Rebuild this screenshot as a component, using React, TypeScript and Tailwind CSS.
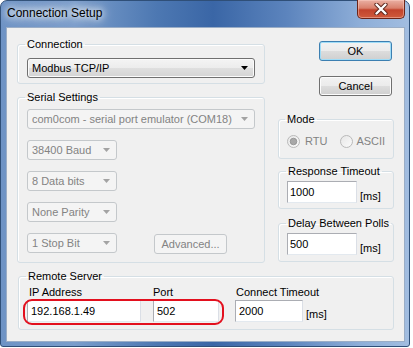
import React from 'react';

const ui = "font-['Liberation_Sans',Arial,sans-serif]";

type GroupProps = {
    title: string;
    className?: string;
    bodyClassName?: string;
    legendClassName?: string;
    children: React.ReactNode;
};

const GroupBox: React.FC<GroupProps> = ({ title, className = '', bodyClassName = '', legendClassName = 'ml-[7px]', children }) => (
    <fieldset className={`rounded-[3px] border border-[#d5dfe5] shadow-[inset_1px_1px_0_#fff] ${className}`}>
        <legend className={`px-[2px] text-[11px] leading-[13px] text-black ${legendClassName}`}>{title}</legend>
        <div className={bodyClassName}>{children}</div>
    </fieldset>
);

const Arrow: React.FC<{ color: string }> = ({ color }) => (
    <svg width="7" height="4" viewBox="0 0 7 4" className="shrink-0">
        <polygon points="0,0 7,0 3.5,4" fill={color} />
    </svg>
);

const Combo: React.FC<{ value: string; className: string; disabled?: boolean }> = ({ value, className, disabled }) => (
    <div
        className={`flex h-[20px] items-center justify-between rounded-[3px] border pl-[4px] pr-[6px] text-[11px] ${
            disabled
                ? 'border-[#c4c8cb] bg-[#f4f4f4] text-[#838383]'
                : 'border-[#707070] bg-[linear-gradient(#f4f4f4,#ececec_50%,#dfdfdf_50%,#d4d4d4)] text-black shadow-[inset_0_0_0_1px_#fbfbfb]'
        } ${className}`}
    >
        <span className="whitespace-nowrap">{value}</span>
        <Arrow color={disabled ? '#a3a3a3' : '#000'} />
    </div>
);

const TextBox: React.FC<{ value: string; className: string }> = ({ value, className }) => (
    <div
        className={`flex h-[22px] items-center border border-[#abadb3] border-b-[#e3e9ef] border-r-[#dbdfe6] bg-white pl-[2px] text-[11px] text-black ${className}`}
    >
        {value}
    </div>
);

const Radio: React.FC<{ checked?: boolean }> = ({ checked }) => (
    <svg width="13" height="13" viewBox="0 0 13 13" className="shrink-0">
        <defs>
            <linearGradient id="rg" x1="0" y1="0" x2="1" y2="1">
                <stop offset="0" stopColor="#e6e6e6" />
                <stop offset="1" stopColor="#fbfbfb" />
            </linearGradient>
        </defs>
        <circle cx="6.5" cy="6.5" r="6" fill="url(#rg)" stroke="#b9b9b9" />
        {checked && <circle cx="6.5" cy="6.5" r="3.3" fill="#a8a8a8" stroke="#8e8e8e" strokeWidth="0.8" />}
    </svg>
);

const WinButton: React.FC<{ label: string; isDefault?: boolean; disabled?: boolean; className?: string }> = ({
    label,
    isDefault,
    disabled,
    className = '',
}) => (
    <div
        className={`flex h-[20px] w-[73px] items-center justify-center rounded-[3px] border text-[11px] ${
            disabled
                ? 'border-[#c4c8cb] bg-[#f4f4f4] text-[#838383]'
                : isDefault
                ? 'border-[#3c7fb1] bg-[linear-gradient(#f2f2f2,#ebebeb_50%,#dddddd_50%,#cfcfcf)] text-black shadow-[inset_0_0_0_1px_#9fdcf7]'
                : 'border-[#707070] bg-[linear-gradient(#f2f2f2,#ebebeb_50%,#dddddd_50%,#cfcfcf)] text-black shadow-[inset_0_0_0_1px_#fcfcfc]'
        } ${className}`}
    >
        {label}
    </div>
);

export default function App() {
    return (
        <div className={`h-[348px] w-[413px] overflow-hidden bg-white ${ui}`}>
            <div className="flex h-[347px] w-[410px] flex-col rounded-t-[7px] rounded-b-[3px] border border-[#2f4f78] bg-[linear-gradient(90deg,#6e93c5_0%,#7a9dcb_18%,#4d78b2_38%,#3a66a6_52%,#5c84bd_70%,#8eaed8_88%,#a2bde0_100%)] pb-[4px] pl-[5px] pr-[4px]">
                {/* title bar */}
                <div className="flex h-[26px] shrink-0 items-start justify-between">
                    <div className="ml-[1px] mt-[5px] text-[12px] leading-[15px] text-black [text-shadow:0_0_6px_#fff,0_0_10px_#fff,0_0_14px_#fff]">
                        Connection Setup
                    </div>
                    <div className="-mt-px flex h-[19px] w-[48px] items-center justify-center rounded-b-[5px] border border-t-0 border-[#6b2418] bg-[linear-gradient(#eab0a3,#d9806c_45%,#c2432c_55%,#cf5a3c)] shadow-[inset_0_0_0_1px_rgba(255,210,200,0.45)]">
                        <svg width="14" height="12" viewBox="0 0 14 12">
                            <path d="M2.5 1.5 L11.5 10.5 M11.5 1.5 L2.5 10.5" stroke="#5a241b" strokeWidth="4.2" strokeLinecap="round" />
                            <path d="M2.5 1.5 L11.5 10.5 M11.5 1.5 L2.5 10.5" stroke="#fff" strokeWidth="2.4" strokeLinecap="round" />
                        </svg>
                    </div>
                </div>

                {/* client area */}
                <div className="flex-1 border border-[#9aadc6] bg-[#f0f0f0] pl-[10px] pt-[10px] text-[11px]">
                    <div className="flex gap-[13px]">
                        {/* left column */}
                        <div className="flex w-[248px] flex-col">
                            <GroupBox title="Connection" bodyClassName="pl-[9px] pt-[7px] pb-[5px]">
                                <Combo value="Modbus TCP/IP" className="w-[228px]" />
                            </GroupBox>
                            <GroupBox title="Serial Settings" className="mt-[7px]" bodyClassName="flex flex-col gap-[11px] pl-[9px] pt-[5px] pb-[8px]">
                                <Combo value="com0com - serial port emulator (COM18)" className="w-[228px]" disabled />
                                <Combo value="38400 Baud" className="w-[90px]" disabled />
                                <Combo value="8 Data bits" className="w-[90px]" disabled />
                                <Combo value="None Parity" className="w-[90px]" disabled />
                                <div className="flex items-start gap-[37px]">
                                    <Combo value="1 Stop Bit" className="w-[90px]" disabled />
                                    <WinButton label="Advanced..." disabled className="mt-px" />
                                </div>
                            </GroupBox>
                        </div>

                        {/* right column */}
                        <div className="flex w-[116px] flex-col">
                            <WinButton label="OK" isDefault className="mr-[2px] mt-[3px] self-end" />
                            <WinButton label="Cancel" className="mr-[2px] mt-[15px] self-end" />
                            <GroupBox title="Mode" className="mt-[17px]" legendClassName="ml-[6px]" bodyClassName="flex h-[14px] items-center pl-[8px] mt-[8px] mb-[10px] text-[#838383]">
                                <Radio checked />
                                <span className="ml-[5px]">RTU</span>
                                <span className="ml-[13px] flex items-center">
                                    <Radio />
                                    <span className="ml-[3px]">ASCII</span>
                                </span>
                            </GroupBox>
                            <GroupBox title="Response Timeout" className="mt-[6px]" bodyClassName="flex items-end gap-[3px] pl-[8px] pt-[3px] pb-[5px]">
                                <TextBox value="1000" className="w-[70px]" />
                                <span className="leading-[13px]">[ms]</span>
                            </GroupBox>
                            <GroupBox title="Delay Between Polls" className="mt-[8px]" bodyClassName="flex items-end gap-[3px] pl-[8px] pt-[3px] pb-[6px]">
                                <TextBox value="500" className="w-[70px]" />
                                <span className="leading-[13px]">[ms]</span>
                            </GroupBox>
                        </div>
                    </div>

                    {/* remote server */}
                    <GroupBox title="Remote Server" className="ml-[1px] mt-[7px] w-[376px]" bodyClassName="relative flex pl-[8px] pt-[3px] pb-[7px]">
                        <div className="flex w-[114px] flex-col">
                            <span className="pl-[2px] leading-[13px]">IP Address</span>
                            <TextBox value="192.168.1.49" className="mt-px w-[114px] pl-[3px]" />
                        </div>
                        <div className="ml-[12px] flex w-[66px] flex-col">
                            <span className="leading-[13px]">Port</span>
                            <TextBox value="502" className="mt-px w-[66px] pl-[3px]" />
                        </div>
                        <div className="ml-[16px] flex flex-col">
                            <span className="pl-px leading-[13px]">Connect Timeout</span>
                            <div className="mt-px flex items-end gap-[3px]">
                                <TextBox value="2000" className="w-[68px] pl-[3px]" />
                                <span className="mb-px leading-[13px]">[ms]</span>
                            </div>
                        </div>
                        {/* annotation ring */}
                        <div className="pointer-events-none absolute left-[4px] top-[16px] h-[26px] w-[201px] rounded-[9px] border-2 border-[#e3101e]" />
                    </GroupBox>
                </div>
            </div>
        </div>
    );
}
